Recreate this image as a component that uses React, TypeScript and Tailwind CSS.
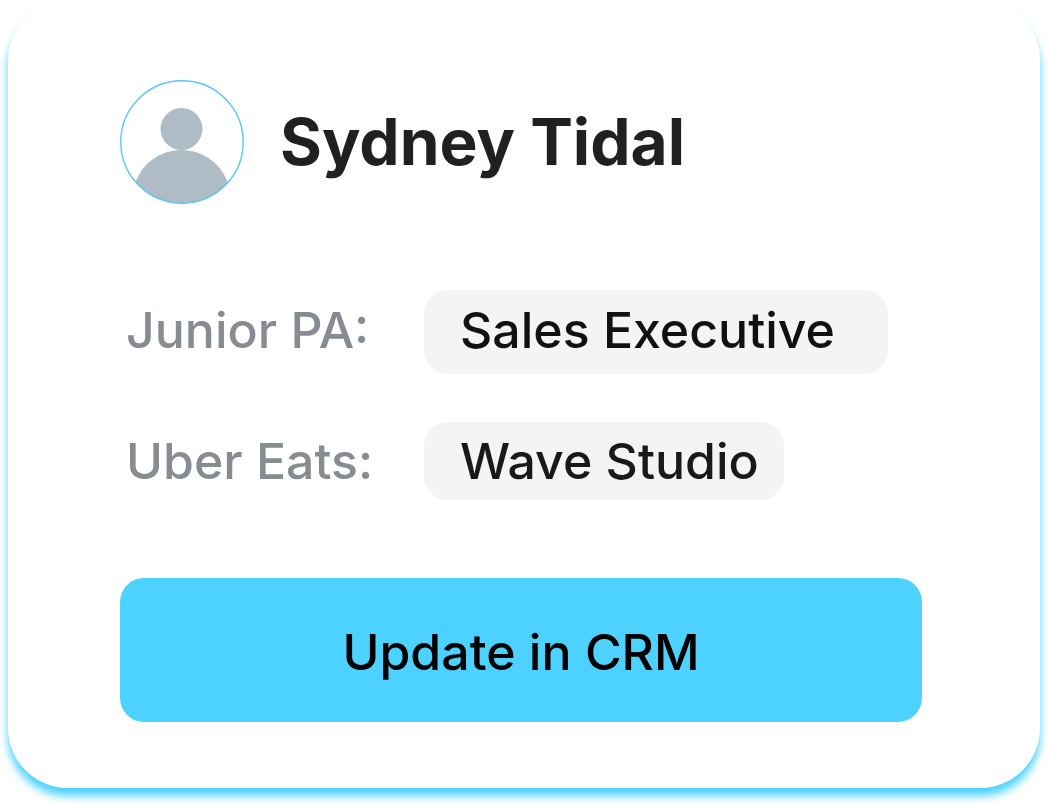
const Avatar = () => {
  return (
    <svg
      className="h-31 w-31 shrink-0"
      viewBox="0 0 124 124"
      role="img"
      aria-label="Profile picture"
    >
      <defs>
        <clipPath id="avatar-circle">
          <circle cx="62" cy="62" r="61.5" />
        </clipPath>
      </defs>
      <g clipPath="url(#avatar-circle)" fill="#b0bcc5">
        <circle cx="61.5" cy="49" r="21" />
        <circle cx="61.5" cy="119" r="49" />
      </g>
      <circle
        cx="62"
        cy="62"
        r="61.2"
        fill="none"
        stroke="#56c8f0"
        strokeWidth="1.4"
      />
    </svg>
  );
};

const ContactCard = () => {
  return (
    <div className="mx-2 mb-4 rounded-[60px] bg-white pt-20 pr-[118px] pb-[66px] pl-28 shadow-[0_8px_8px_#4dd2ff]">
      <div className="flex items-center gap-9">
        <Avatar />
        <h1 className="text-[64px] leading-none font-bold whitespace-nowrap text-[#221f20]">
          Sydney Tidal
        </h1>
      </div>
      <dl className="mt-[86px] text-[50px] font-medium whitespace-nowrap">
        <div className="flex items-center">
          <dt className="w-[304px] shrink-0 pb-1 pl-1.5 leading-none text-[#868c91]">
            Junior PA:
          </dt>
          <dd className="w-[464px] rounded-3xl bg-[#f4f4f4] pt-2 pb-3 pl-9 leading-[64px] text-[#111111]">
            Sales Executive
          </dd>
        </div>
        <div className="mt-12 flex items-center">
          <dt className="w-[304px] shrink-0 pl-1.5 leading-none text-[#868c91]">
            Uber Eats:
          </dt>
          <dd className="w-[360px] rounded-3xl bg-[#f4f4f4] py-[7px] pl-9 leading-[64px] text-[#191919]">
            Wave Studio
          </dd>
        </div>
      </dl>
      <button
        type="button"
        className="mt-[78px] h-36 w-full cursor-pointer rounded-3xl bg-[#4dd2ff] pt-1 text-[50px] font-medium text-black"
      >
        Update in CRM
      </button>
    </div>
  );
};

const App = () => {
  return (
    <main className="overflow-hidden bg-white font-['Inter',sans-serif]">
      <ContactCard />
    </main>
  );
};

export default App;
